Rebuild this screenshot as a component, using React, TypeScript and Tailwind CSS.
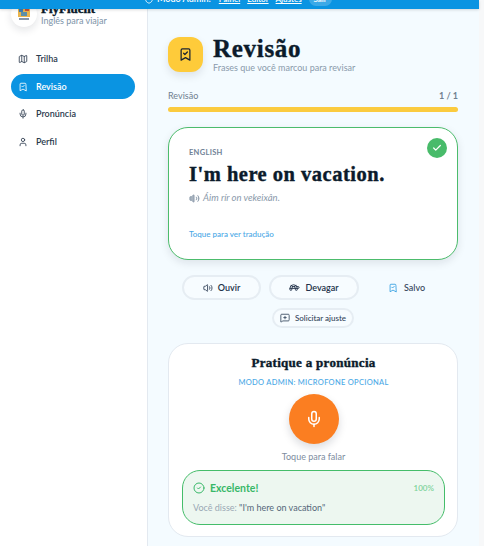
import { BookmarkCheck, Map, Mic, User, Volume2, Turtle, MessageSquarePlus, Check, CircleCheck, ShieldCheck } from "lucide-react";

const nav = [
  { label: "Trilha", icon: Map },
  { label: "Revisão", icon: BookmarkCheck, active: true },
  { label: "Pronúncia", icon: Mic },
  { label: "Perfil", icon: User },
];

const serif = "font-['Liberation_Serif',serif] [-webkit-text-stroke:0.4px_#0b1b2b]";

function LogoMark() {
  return (
    <svg viewBox="0 0 12 14" className="h-[14px] w-[12px]">
      <rect width="12" height="10" fill="#e9b44c" />
      <rect x="1" y="1" width="4" height="4" fill="#3f7fb5" />
      <rect x="7" y="1" width="4" height="3" fill="#c9503c" />
      <rect x="3" y="5" width="6" height="4" fill="#5b8fa8" />
      <rect x="1" y="11" width="10" height="2" fill="#8494a8" />
    </svg>
  );
}

function Sidebar() {
  return (
    <aside className="flex w-[148px] shrink-0 flex-col border-r border-[#e3e9f0] bg-white pr-[12px] pl-[11px]">
      <div className="-mt-[8px] flex items-start gap-[4px]">
        <div className="flex h-[26px] w-[26px] shrink-0 items-center justify-center rounded-full bg-white shadow-[0_3px_8px_rgba(15,23,42,0.12)]">
          <LogoMark />
        </div>
        <div className="mt-[1px]">
          <div className={`${serif} text-[13px] leading-[14px] font-bold text-[#0b1b2b]`}>FlyFluent</div>
          <div className="-mt-[1px] text-[9px] leading-[11px] text-[#7d93a8]">Inglês para viajar</div>
        </div>
      </div>
      <nav className="mt-[19.5px] flex flex-col gap-[2.5px]">
        {nav.map((item) => (
          <div
            key={item.label}
            className={`flex h-[25px] items-center gap-[8px] rounded-full px-[7px] text-[9px] font-semibold ${
              item.active ? "bg-[#0a94e2] text-white" : "text-[#2b3a4d]"
            }`}
          >
            <item.icon className="h-[10px] w-[10px]" strokeWidth={2} />
            <span>{item.label}</span>
          </div>
        ))}
      </nav>
    </aside>
  );
}

function TopBar() {
  return (
    <header className="relative z-10 flex h-[9px] items-end gap-[7px] overflow-hidden bg-[#0a94e2] pb-[3px] pl-[144px] text-[8px] leading-[14px] font-semibold text-white shadow-[0_1px_3px_rgba(0,0,0,0.15)]">
      <span className="mr-[1px] flex shrink-0 items-center gap-[3px] text-[9px]">
        <ShieldCheck className="h-[10px] w-[10px]" />
        Modo Admin:
      </span>
      <span className="shrink-0 underline">Painel</span>
      <span className="shrink-0 underline">Editor</span>
      <span className="shrink-0 underline">Ajustes</span>
      <span className="w-[23px] shrink-0 rounded-full bg-white/20 text-center">Sair</span>
    </header>
  );
}

function PhraseCard() {
  return (
    <div className="relative mt-[15px] h-[133px] rounded-[20px] border-[1.5px] border-[#4cbc6c] bg-white px-[20px] pt-[20px] shadow-[0_3px_8px_rgba(15,23,42,0.1)]">
      <div className="absolute top-[10px] right-[10px] flex h-[20px] w-[20px] items-center justify-center rounded-full bg-[#48bb6a]">
        <Check className="h-[10px] w-[10px] text-white" strokeWidth={3} />
      </div>
      <div className="text-[7.5px] leading-[10px] font-bold tracking-[0.04em] text-[#6f8296]">ENGLISH</div>
      <div className={`${serif} mt-[3px] text-[20.5px] leading-[26px] font-bold tracking-[0.5px] whitespace-nowrap text-[#0b1b2b]`}>
        I'm here on vacation.
      </div>
      <div className="mt-[5px] flex items-center gap-[3px] text-[9.5px] leading-[12px] text-[#8a99aa] italic">
        <Volume2 className="h-[11px] w-[11px] fill-[#a9b4c0]" />
        Áim rír on vekeixân.
      </div>
      <div className="mt-[25px] text-[8px] leading-[10px] font-medium text-[#4aa8e6]">Toque para ver tradução</div>
    </div>
  );
}

function Actions() {
  const pill =
    "flex h-[25px] items-center justify-center gap-[5px] rounded-full border-2 border-[#e6edf3] bg-[#f7fcff] text-[9px] font-semibold text-[#22324a]";
  return (
    <div className="mt-[15px] flex flex-col items-center gap-[8px]">
      <div className="flex w-full items-center gap-[8px] pl-[14px]">
        <div className={`${pill} w-[79px]`}>
          <Volume2 className="h-[10px] w-[10px]" />
          Ouvir
        </div>
        <div className={`${pill} w-[90px]`}>
          <Turtle className="h-[11px] w-[11px]" />
          Devagar
        </div>
        <div className="ml-[21px] flex items-center gap-[6px] text-[9px] font-medium text-[#33445a]">
          <BookmarkCheck className="h-[10px] w-[10px] text-[#2c9be0]" />
          Salvo
        </div>
      </div>
      <div className="flex h-[20px] w-[82px] items-center justify-center gap-[5px] rounded-full border-2 border-[#e6edf3] bg-[#f7fcff] text-[8px] font-medium text-[#33445a]">
        <MessageSquarePlus className="h-[10px] w-[10px]" />
        Solicitar ajuste
      </div>
    </div>
  );
}

function Practice() {
  return (
    <div className="mt-[15px] flex flex-col items-center rounded-[20px] border border-[#e3e9f0] bg-white pt-[11px] pr-[12px] pb-[11px] pl-[13px]">
      <div className={`${serif} text-[13px] leading-[15px] font-bold tracking-[0.3px] text-[#0b1b2b]`}>Pratique a pronúncia</div>
      <div className="mt-[8px] text-[7.5px] leading-[10px] font-medium tracking-[0.04em] text-[#4aa8e6]">
        MODO ADMIN: MICROFONE OPCIONAL
      </div>
      <div className="mt-[6px] flex h-[50px] w-[50px] items-center justify-center rounded-full bg-[#fb7e21] shadow-[0_4px_8px_rgba(15,23,42,0.15)]">
        <Mic className="h-[18px] w-[18px] text-white" />
      </div>
      <div className="mt-[7px] text-[9px] leading-[12px] text-[#7d8c9e]">Toque para falar</div>
      <div className="mt-[7px] w-full rounded-[18px] border border-[#45bd6a] bg-[#edf7f0] px-[10px] pt-[10px] pb-[11px]">
        <div className="flex items-center gap-[5px]">
          <CircleCheck className="h-[12px] w-[12px] text-[#38b868]" />
          <span className="text-[10.5px] leading-[14px] font-bold text-[#38b868]">Excelente!</span>
          <span className="ml-auto text-[8px] font-semibold text-[#7fd39b]">100%</span>
        </div>
        <div className="mt-[7px] text-[9px] leading-[11px] text-[#9aa8b4]">
          Você disse: <span className="text-[#55677a]">"I'm here on vacation"</span>
        </div>
      </div>
    </div>
  );
}

export default function App() {
  return (
    <div className="flex h-[546px] w-[484px] overflow-hidden bg-[#f7f8f9] font-['Lato',sans-serif]">
      <div className="flex w-[479px] shrink-0 flex-col">
        <TopBar />
        <div className="flex min-h-0 flex-1">
          <Sidebar />
          <main className="w-[331px] bg-[#f4fbff] pt-[28px] pr-[21px] pl-[20px]">
            <div className="flex gap-[10px]">
              <div className="flex h-[35px] w-[35px] items-center justify-center rounded-[12px] bg-[#fecb3a] shadow-[0_4px_8px_rgba(15,23,42,0.1)]">
                <BookmarkCheck className="h-[15px] w-[15px] text-[#1a2433]" />
              </div>
              <div>
                <h1 className={`${serif} text-[25px] leading-[23px] font-bold tracking-[0.7px] text-[#0b1b2b]`}>Revisão</h1>
                <p className="mt-[3px] text-[9px] leading-[10px] text-[#8a9aab]">Frases que você marcou para revisar</p>
              </div>
            </div>
            <div className="mt-[17px] flex justify-between text-[9px] leading-[12px] text-[#6f8090]">
              <span>Revisão</span>
              <span className="font-bold">1 / 1</span>
            </div>
            <div className="mt-[5px] h-[5px] rounded-full bg-[#fbcb3f]" />
            <PhraseCard />
            <Actions />
            <Practice />
          </main>
        </div>
      </div>
    </div>
  );
}
